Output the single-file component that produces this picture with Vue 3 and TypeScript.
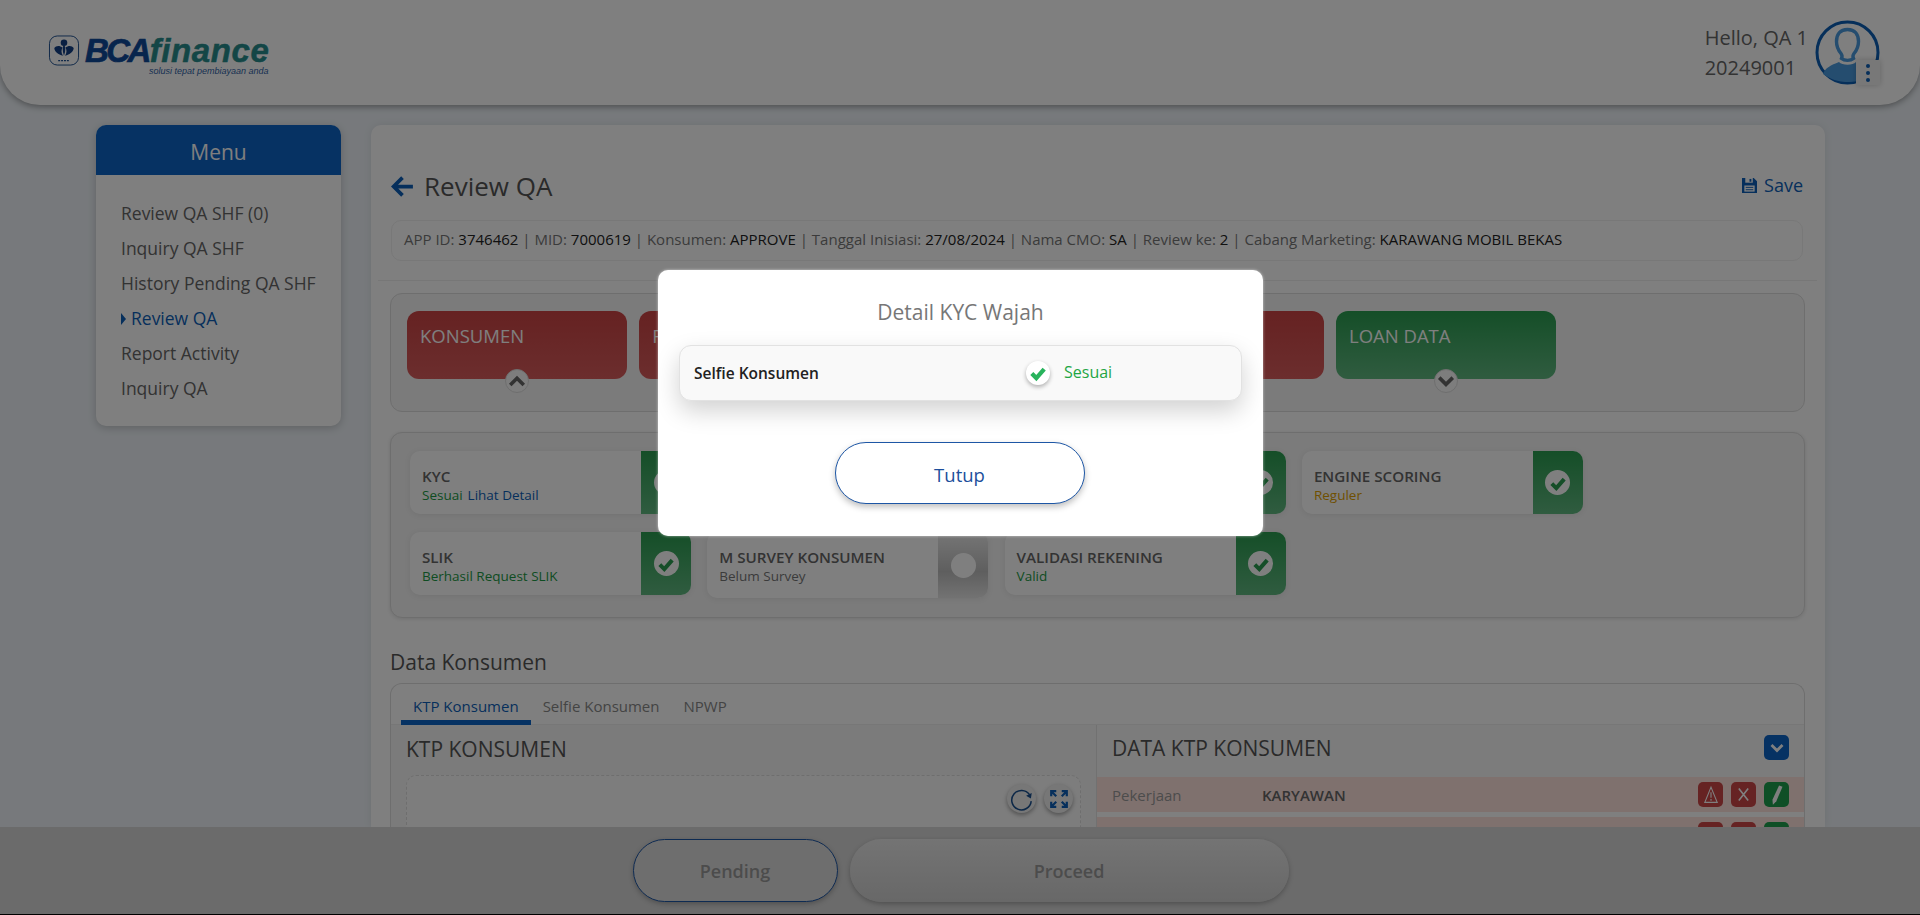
<script setup lang="ts">
const menu = [
  { label: 'Review QA SHF (0)', active: false },
  { label: 'Inquiry QA SHF', active: false },
  { label: 'History Pending QA SHF', active: false },
  { label: 'Review QA', active: true },
  { label: 'Report Activity', active: false },
  { label: 'Inquiry QA', active: false },
]
const info = [
  ['APP ID', '3746462'],
  ['MID', '7000619'],
  ['Konsumen', 'APPROVE'],
  ['Tanggal Inisiasi', '27/08/2024'],
  ['Nama CMO', 'SA'],
  ['Review ke', '2'],
  ['Cabang Marketing', 'KARAWANG MOBIL BEKAS'],
]
const chips = [
  { label: 'KONSUMEN', tone: 'red', up: true },
  { label: 'F', tone: 'red', up: false },
  { label: '', tone: 'red', up: false },
  { label: '', tone: 'red', up: false },
  { label: 'LOAN DATA', tone: 'green', up: false },
]
type Status = { title: string; sub: string; subClass: string; link?: string; grey?: boolean }
const statuses: Status[] = [
  { title: 'KYC', sub: 'Sesuai', subClass: 'ok', link: 'Lihat Detail' },
  { title: '', sub: '', subClass: 'ok' },
  { title: '', sub: '', subClass: 'ok' },
  { title: 'ENGINE SCORING', sub: 'Reguler', subClass: 'warn' },
  { title: 'SLIK', sub: 'Berhasil Request SLIK', subClass: 'ok' },
  { title: 'M SURVEY KONSUMEN', sub: 'Belum Survey', subClass: 'muted', grey: true },
  { title: 'VALIDASI REKENING', sub: 'Valid', subClass: 'ok' },
]
</script>

<template>
  <div class="shell">
    <header class="topbar">
      <div class="logo">
        <svg class="emblem" viewBox="0 0 32 32" width="32" height="31">
          <rect x="1" y="1" width="30" height="30" rx="8" fill="none" stroke="#1d4f91" stroke-width="1" />
          <circle cx="16" cy="8" r="3.4" fill="#123f85" />
          <path d="M16 10c-1.800 2-1.800 6 0 11.500 1.800-5.500 1.800-9.500 0-11.500z" fill="#123f85" />
          <path d="M14.500 13c-3-2.500-7-2-8.500 .5 0 3.500 4 7 9 8-2-3-2-5.500-.5-8.500z" fill="#123f85" />
          <path d="M17.500 13c3-2.500 7-2 8.500 .5 0 3.500-4 7-9 8 2-3 2-5.500 .5-8.500z" fill="#123f85" />
          <path d="M10 26.500h12" stroke="#1d4f91" stroke-width="1.400" stroke-dasharray="2 1" />
        </svg>
        <div class="wordmark">
          <div class="word"><span class="bca">BCA</span><span class="fin">finance</span></div>
          <div class="tag">solusi tepat pembiayaan anda</div>
        </div>
      </div>
      <div class="user">
        <div class="user-text">
          <div>Hello, QA 1</div>
          <div>20249001</div>
        </div>
        <div class="avatar">
          <svg viewBox="0 0 65 65" width="65" height="65">
            <circle cx="32.500" cy="32.500" r="30.500" fill="#fff" stroke="#0c5fb5" stroke-width="3" />
            <path d="M32.500 9.500c-7.500 0-11 5-11 12 0 5 2 9 4.500 12 1.500 2 1 4 .5 5 3 2.500 9 2.500 12 0-.5-1-1-3 .5-5 2.500-3 4.500-7 4.500-12 0-7-3.500-12-11-12z" fill="none" stroke="#4a9ade" stroke-width="3.400" />
            <path d="M8 54c2-6 8-9 16-12 3 3.500 14 3.500 17 0 8 2 13 6 16 12-6 5-14 8-24 8s-18-3-25-8z" fill="#4a9ade" />
          </svg>
          <div class="dots"><i></i><i></i><i></i></div>
        </div>
      </div>
    </header>

    <div class="body">
      <aside class="side">
        <div class="side-head">Menu</div>
        <ul class="side-list">
          <li v-for="m in menu" :key="m.label" :class="{ active: m.active }">
            <span v-if="m.active" class="caret"></span>{{ m.label }}
          </li>
        </ul>
      </aside>

      <main class="card">
        <div class="title-row">
          <svg class="back" viewBox="0 0 24 24" width="25" height="25">
            <path d="M22 12H4M12 3.500 3.500 12 12 20.500" fill="none" stroke="#0d5fb8" stroke-width="3.600" />
          </svg>
          <h1>Review QA</h1>
          <div class="save">
            <svg viewBox="0 0 16 16" width="15" height="15">
              <path d="M0 0h12.500L16 3.500V16H0z" fill="#0d5fb8" />
              <rect x="3.500" y="0" width="8" height="5" fill="#fff" />
              <rect x="8" y="1" width="2" height="3" fill="#0d5fb8" />
              <rect x="2.500" y="8" width="11" height="6.500" fill="#fff" />
              <path d="M4 10h8M4 12.500h8" stroke="#0d5fb8" stroke-width="1" />
            </svg>
            <span>Save</span>
          </div>
        </div>

        <div class="info">
          <template v-for="(pair, i) in info" :key="pair[0]">
            <span v-if="i > 0"> | </span>{{ pair[0] }}: <b>{{ pair[1] }}</b>
          </template>
        </div>
        <div class="divider"></div>

        <section class="group chips">
          <div v-for="(c, i) in chips" :key="i" class="chip" :class="c.tone">
            {{ c.label }}
            <span class="knob">
              <svg viewBox="0 0 16 16" width="18" height="18">
                <path :d="c.up ? 'M2 11.500 8 5.500l6 6' : 'M2 5l6 6 6-6'" fill="none" stroke="#666" stroke-width="3.200" />
              </svg>
            </span>
          </div>
        </section>

        <section class="group statuses">
          <div v-for="(s, i) in statuses" :key="i" class="status" :class="{ tall: s.grey }">
            <div class="status-text">
              <div class="status-title">{{ s.title }}</div>
              <div class="status-sub">
                <span :class="s.subClass">{{ s.sub }}</span>
                <span v-if="s.link" class="link">{{ s.link }}</span>
              </div>
            </div>
            <div class="status-side" :class="{ grey: s.grey }">
              <span class="dot">
                <svg v-if="!s.grey" viewBox="0 0 16 16" width="18" height="18">
                  <path d="M2.500 8.500 6.500 12.500 13.500 4.500" fill="none" stroke="#2a9d50" stroke-width="3.600" />
                </svg>
              </span>
            </div>
          </div>
        </section>

        <h2 class="section-title">Data Konsumen</h2>
        <section class="tabs-box">
          <nav class="tabs">
            <span class="tab on">KTP Konsumen</span>
            <span class="tab">Selfie Konsumen</span>
            <span class="tab">NPWP</span>
          </nav>
          <div class="panes">
            <div class="pane-left">
              <h3>KTP KONSUMEN</h3>
              <div class="dropbox">
                <span class="round">
                  <svg viewBox="0 0 24 24" width="26" height="26">
                    <path d="M19 8a9 9 0 1 0 1.500 6" fill="none" stroke="#184f8f" stroke-width="1.400" />
                    <path d="M21 6.500l-.8 5-4.400-2.400z" fill="#184f8f" />
                  </svg>
                </span>
                <span class="round">
                  <svg viewBox="0 0 24 24" width="22" height="22" fill="none" stroke="#0d5fb8" stroke-width="2.400">
                    <path d="M9 3.500H3.500V9M3.500 3.500l5.500 5.500M15 3.500h5.500V9M20.500 3.500 15 9M9 20.500H3.500V15M3.500 20.500 9 15M15 20.500h5.500V15M20.500 20.500 15 15" />
                  </svg>
                </span>
              </div>
            </div>
            <div class="pane-right">
              <div class="pane-head">
                <h3>DATA KTP KONSUMEN</h3>
                <span class="square blue">
                  <svg viewBox="0 0 16 16" width="16" height="16">
                    <path d="M2.500 5 8 10.500 13.500 5" fill="none" stroke="#fff" stroke-width="2.800" />
                  </svg>
                </span>
              </div>
              <div class="row">
                <span class="row-label">Pekerjaan</span>
                <span class="row-value">KARYAWAN</span>
                <div class="row-actions">
                  <span class="square red">
                    <svg viewBox="0 0 16 16" width="18" height="20" fill="none" stroke="#fff" stroke-width="1">
                      <path d="M8 1 13.500 14.500H2.500z" />
                      <path d="M8 5.500v5M8 11.500v1.500" />
                    </svg>
                  </span>
                  <span class="square red">
                    <svg viewBox="0 0 16 16" width="15" height="17" fill="none" stroke="#fff" stroke-width="1.700">
                      <path d="M3 1.500 13 14.500M13 1.500 3 14.500" />
                    </svg>
                  </span>
                  <span class="square green">
                    <svg viewBox="0 0 16 16" width="22" height="24">
                      <path d="M9.500 1 12 2 7.500 12.500 5 15l-.3-3.500z" fill="#fff" />
                    </svg>
                  </span>
                </div>
              </div>
              <div class="row">
                <div class="row-actions">
                  <span class="square red"></span>
                  <span class="square red"></span>
                  <span class="square green"></span>
                </div>
              </div>
            </div>
          </div>
        </section>
      </main>
    </div>

    <footer class="footer">
      <button class="pill pending">Pending</button>
      <button class="pill proceed">Proceed</button>
    </footer>
    <div class="endline"></div>

    <div class="overlay">
      <div class="modal">
        <div class="modal-title">Detail KYC Wajah</div>
        <div class="modal-row">
          <span class="modal-label">Selfie Konsumen</span>
          <span class="modal-check">
            <svg viewBox="0 0 16 16" width="18" height="18">
              <path d="M2.500 8.500 6.500 12.500 13.500 4.500" fill="none" stroke="#28b35c" stroke-width="3.800" />
            </svg>
          </span>
          <span class="modal-value">Sesuai</span>
        </div>
        <button class="modal-btn">Tutup</button>
      </div>
    </div>
  </div>
</template>

<style>
html, body { margin: 0; padding: 0; overflow: hidden; background: #000; }
</style>

<style scoped>
* { box-sizing: border-box; }
.shell {
  position: relative;
  width: 1920px;
  height: 915px;
  overflow: hidden;
  display: flex;
  flex-direction: column;
  background: #eef3f8;
  font-family: "Open Sans", "Liberation Sans", sans-serif;
  color: #555;
}
.topbar {
  flex: 0 0 105px;
  display: flex;
  align-items: flex-start;
  justify-content: space-between;
  background: #fff;
  border-radius: 0 0 40px 40px;
  box-shadow: 0 2px 6px rgba(0, 0, 0, .35);
  padding: 20px 40px 0 48px;
  position: relative;
  z-index: 2;
}
.logo { display: flex; gap: 5px; margin-top: 15px; }
.wordmark { margin-top: 1px; }
.word { font-family: "Liberation Sans", sans-serif; font-weight: 700; font-style: italic; font-size: 33px; line-height: 30px; white-space: nowrap; }
.bca { color: #0f4a9b; letter-spacing: -2.600px; -webkit-text-stroke: .7px #0f4a9b; }
.fin { color: #278c8c; letter-spacing: .6px; margin-left: 1px; -webkit-text-stroke: .5px #278c8c; }
.tag { font-family: "Liberation Sans", sans-serif; font-style: italic; font-size: 9px; line-height: 10px; color: #2f5fa5; margin-left: 64px; white-space: nowrap; }
.user { display: flex; gap: 7px; }
.user-text { font-size: 20px; line-height: 30px; padding-top: 3px; color: #666; }
.avatar { position: relative; width: 65px; height: 65px; }
.avatar svg { display: block; }
.dots {
  position: absolute; right: 0; bottom: 0; width: 24px; height: 25px;
  background: #f0f0f0; box-shadow: 0 0 6px rgba(0, 0, 0, .2);
  display: flex; flex-direction: column; align-items: center; justify-content: center; gap: 3px;
}
.dots i { width: 4px; height: 4px; border-radius: 50%; background: #0c5fb5; }

.body { flex: 1; min-height: 0; display: flex; gap: 30px; padding: 20px 95px 0 96px; overflow: hidden; }
.side {
  flex: 0 0 245px; align-self: flex-start; height: 301px;
  background: #fff; border-radius: 10px; box-shadow: 0 2px 8px rgba(0, 0, 0, .2); overflow: hidden;
}
.side-head { height: 50px; background: #0c64c6; color: #fff; display: flex; align-items: center; justify-content: center; font-size: 21px; font-weight: 500; padding-top: 3px; }
.side-list { list-style: none; margin: 0; padding: 21px 0 0 25px; font-size: 17.500px; line-height: 35px; color: #666; }
.side-list li { white-space: nowrap; height: 35px; }
.side-list .active { color: #0d5fb8; font-weight: 500; }
.caret { display: inline-block; border-left: 5px solid #0d5fb8; border-top: 6px solid transparent; border-bottom: 6px solid transparent; margin-right: 5px; }

.card { flex: 1; min-width: 0; background: #fff; border-radius: 10px 10px 0 0; padding: 43px 20px 0 19px; box-shadow: 0 0 8px rgba(0, 0, 0, .08); }
.title-row { height: 36px; display: flex; align-items: center; }
.back { margin-right: 9px; }
h1 { font-size: 26px; font-weight: 400; color: #555; margin: 0; }
.save { margin-left: auto; margin-right: 2px; margin-top: -2px; display: flex; align-items: center; gap: 7px; color: #0d5fb8; font-size: 18px; }
.info {
  margin: 16px 2px 0 1px; height: 41px; border: 1px solid #f0f0f0; border-radius: 10px;
  display: block; line-height: 37px; padding-left: 12px; font-size: 15px; color: #777; white-space: pre-wrap;
}
.info b { font-weight: 400; color: #222; }
.divider { height: 1px; background: #eee; margin: 19px -12px 0; }
.group { border: 1px solid #ddd; border-radius: 12px; background: #f6f6f6; }
.chips { margin-top: 12px; height: 119px; display: flex; gap: 12.250px; padding: 17px 16px; }
.chip { position: relative; flex: 0 0 220px; height: 68px; border-radius: 12px; padding: 12px 13px; font-size: 18.500px; line-height: 25px; color: #fff; }
.chip.red { background: linear-gradient(#cc4444, #d85c5c); }
.chip.green { background: linear-gradient(#2a9d50, #60b880); }
.knob {
  position: absolute; left: 50%; bottom: -14px; transform: translateX(-50%);
  width: 24px; height: 24px; border-radius: 50%; background: #fafafa; border: 1px solid #ddd;
  display: flex; align-items: center; justify-content: center;
}
.statuses {
  margin-top: 20px; height: 186px; padding: 18px 19px;
  display: grid; grid-template-columns: repeat(4, 281px); column-gap: 16.300px; row-gap: 18px; align-content: start;
  box-shadow: 0 1px 4px rgba(0, 0, 0, .12);
}
.status { height: 63px; display: flex; background: #fff; border-radius: 10px; box-shadow: 0 1px 6px rgba(0, 0, 0, .08); overflow: hidden; }
.status.tall { height: 66px; }
.status-text { flex: 1; padding: 15px 0 0 12px; min-width: 0; }
.status-title { font-size: 15.200px; font-weight: 600; line-height: 20px; height: 20px; color: #666; white-space: nowrap; }
.status-sub { font-size: 13.500px; line-height: 19px; white-space: nowrap; }
.ok { color: #1d9a45; }
.warn { color: #e0a000; font-weight: 500; }
.muted { color: #777; }
.link { color: #0d5fb8; margin-left: 5px; }
.status-side { flex: 0 0 50px; background: linear-gradient(#2a9d50, #60b880); display: flex; align-items: center; justify-content: center; }
.status-side.grey { background: linear-gradient(#ededed, #bdbdbd 60%, #e6e6e6); }
.dot { width: 25px; height: 25px; border-radius: 50%; background: #fff; display: flex; align-items: center; justify-content: center; }

.section-title { margin: 31px 0 0; font-size: 21px; line-height: 27px; font-weight: 500; color: #555; }
.tabs-box { margin-top: 7px; border: 1px solid #ddd; border-bottom: 0; border-radius: 12px 12px 0 0; }
.tabs { height: 41px; display: flex; padding-left: 10px; border-bottom: 1px solid #eee; }
.tab { padding: 0 12px; line-height: 44px; height: 41px; font-size: 15px; color: #888; white-space: nowrap; }
.tab.on { color: #0d5fb8; border-bottom: 5px solid #0c64c6; }
.panes { display: flex; }
.pane-left { flex: 0 0 706px; background: #f6f6f6; border-right: 1px solid #e2e2e2; padding: 9px 15px 0; height: 200px; }
h3 { margin: 0; font-size: 21px; font-weight: 400; line-height: 30px; color: #555; }
.dropbox { margin-top: 11px; height: 150px; border: 1px dashed #ddd; border-radius: 10px; display: flex; justify-content: flex-end; gap: 8px; padding: 8px 7px; background: #fafafa; }
.round { width: 29px; height: 29px; border-radius: 50%; background: #eee; box-shadow: 0 2px 4px rgba(0, 0, 0, .35); display: flex; align-items: center; justify-content: center; }
.pane-right { flex: 1; min-width: 0; }
.pane-head { height: 52px; background: #f9f9f9; display: flex; align-items: center; justify-content: space-between; padding: 0 15px 7px; }
.square { width: 25px; height: 25px; border-radius: 5px; display: inline-flex; align-items: center; justify-content: center; }
.square.blue { background: #0c64c6; }
.square.red { background: #cc4646; }
.square.green { background: #1f9e4c; }
.row { height: 35px; margin-bottom: 5px; background: #ffe3dd; display: flex; align-items: center; padding: 0 15px; }
.row-label { width: 150px; font-size: 15px; color: #999; }
.row-value { font-size: 15px; font-weight: 600; color: #666; }
.row-actions { margin-left: auto; display: flex; gap: 8px; }

.footer { flex: 0 0 87px; background: #d6d6d6; display: flex; align-items: center; justify-content: center; gap: 12px; padding: 0 0 0 1px; position: relative; z-index: 1; }
.pill { height: 63px; border-radius: 32px; font-family: inherit; font-size: 18px; font-weight: 600; color: #999; box-shadow: 0 2px 5px rgba(0, 0, 0, .25); }
.pending { width: 205px; background: #ddd; border: 1px solid #1d56a5; }
.proceed { width: 439px; background: linear-gradient(#e8e8e8, #d0d0d0); border: 0; }
.endline { flex: 0 0 1px; background: #000; position: relative; z-index: 1; }

.overlay { position: absolute; inset: 0; z-index: 5; background: rgba(0, 0, 0, .5); }
.modal {
  position: absolute; left: 658px; top: 270px; width: 605px; height: 266px;
  background: #fff; border-radius: 10px; box-shadow: 0 0 3px rgba(255, 255, 255, .6);
  padding: 0 21px; display: flex; flex-direction: column; align-items: center;
}
.modal-title { margin-top: 28px; font-size: 21px; line-height: 28px; color: #777; }
.modal-row {
  margin-top: 19px; width: 563px; height: 56px; flex: none; background: #f9f9f9; border: 1px solid #e2e2e2; border-radius: 12px;
  box-shadow: 0 10px 24px rgba(0, 0, 0, .18); display: flex; align-items: center; padding-left: 14px;
}
.modal-label { font-size: 15.500px; font-weight: 600; color: #222; width: 332px; }
.modal-check { width: 24px; height: 24px; border-radius: 50%; background: #fff; box-shadow: 0 2px 4px rgba(0, 0, 0, .3); display: flex; align-items: center; justify-content: center; }
.modal-value { margin-left: 14px; font-size: 16px; color: #1fa644; margin-top: -3px; }
.modal-btn {
  margin-top: 41px; margin-left: -2px; width: 250px; height: 62px; flex: none; background: #fff; border: 1px solid #1d56a5; border-radius: 31px; padding-top: 3px;
  box-shadow: 0 3px 6px rgba(0, 0, 0, .25); font-family: inherit; font-size: 18.500px; font-weight: 500; color: #1d4f9c;
}
</style>
